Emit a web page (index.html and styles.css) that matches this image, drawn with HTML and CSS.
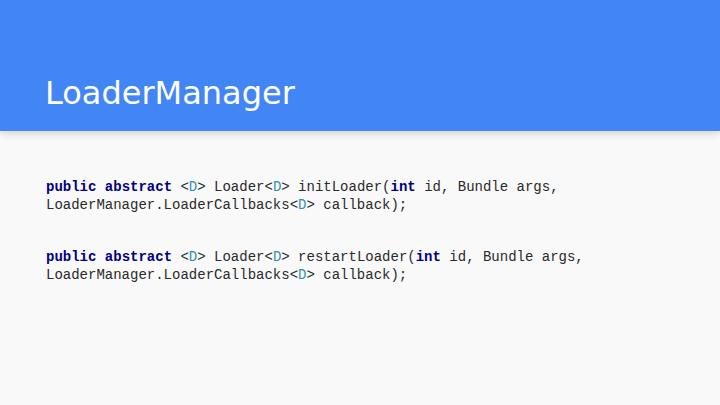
FILE: index.html
```html
<!DOCTYPE html>
<html>
<head>
<meta charset="utf-8">
<link rel="stylesheet" href="styles.css">
</head>
<body>
<header class="header"><h1 class="title">LoaderManager</h1></header>
<main class="content">
<p class="code"><span class="kw">public</span> <span class="kw">abstract</span> &lt;<span class="ty">D</span>&gt; Loader&lt;<span class="ty">D</span>&gt; initLoader(<span class="kw">int</span> id, Bundle args,<br>LoaderManager.LoaderCallbacks&lt;<span class="ty">D</span>&gt; callback);</p>
<p class="code"><span class="kw">public</span> <span class="kw">abstract</span> &lt;<span class="ty">D</span>&gt; Loader&lt;<span class="ty">D</span>&gt; restartLoader(<span class="kw">int</span> id, Bundle args,<br>LoaderManager.LoaderCallbacks&lt;<span class="ty">D</span>&gt; callback);</p>
</main>
</body>
</html>
```
FILE: styles.css
```css
html, body {
  margin: 0;
  padding: 0;
  width: 720px;
  height: 405px;
  overflow: hidden;
  background: #f9f9f9;
}
.header {
  height: 131px;
  background: #4285f4;
  box-shadow: 0 2px 8px rgba(0,0,0,0.18);
  display: flex;
  align-items: flex-end;
  padding: 0 45px;
  box-sizing: border-box;
  position: relative;
}
.title {
  margin: 0 0 18px 0;
  font-family: "DejaVu Sans", sans-serif;
  font-weight: normal;
  font-size: 32px;
  color: #ffffff;
  line-height: 40px;
}
.content {
  padding: 47px 46px 0 46px;
}
.code {
  margin: 0 0 34px 0;
  font-family: "Liberation Mono", monospace;
  font-size: 14px;
  line-height: 18px;
  color: #2a2a2a;
  white-space: nowrap;
}
.kw {
  color: #000080;
  font-weight: bold;
}
.ty {
  color: #2b91af;
}
```
